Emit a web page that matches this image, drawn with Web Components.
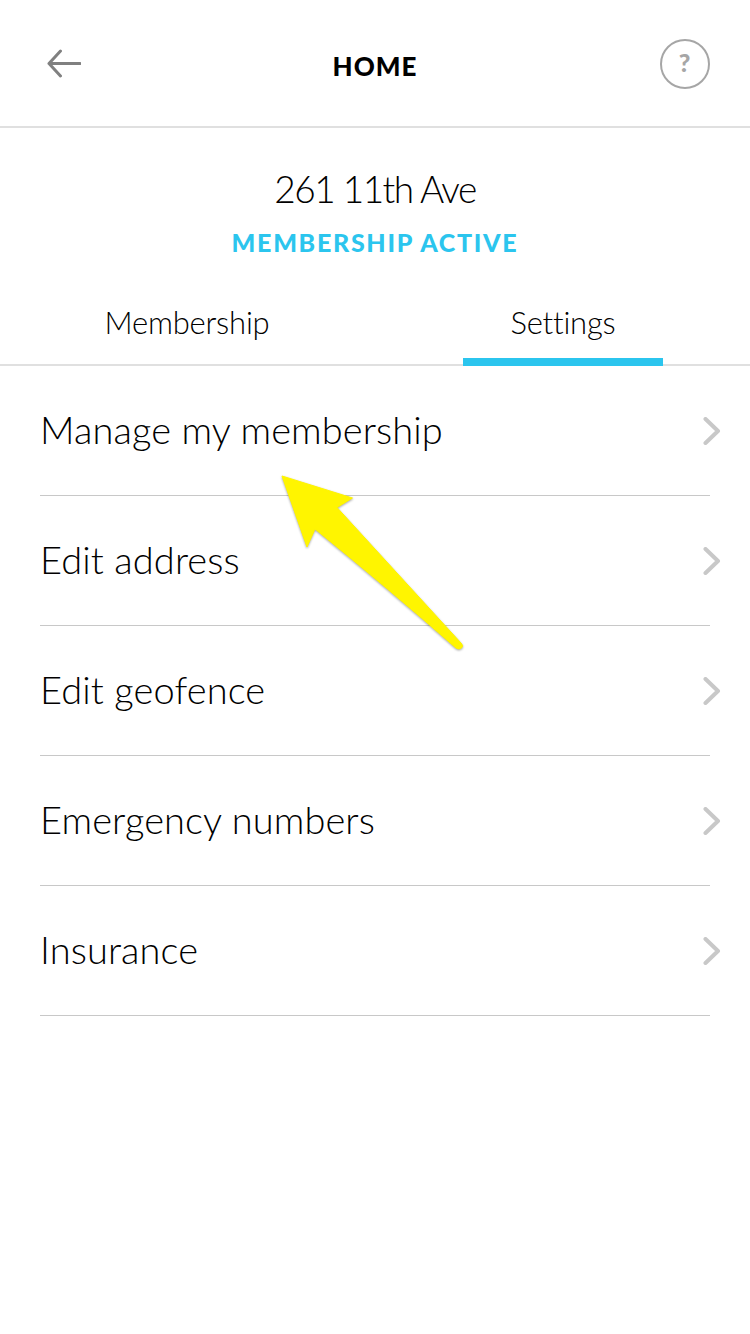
<!DOCTYPE html>
<html>
<head>
<meta charset="utf-8">
<title>Home</title>
<style>
html, body { margin: 0; padding: 0; background: #fff; }
body { width: 750px; height: 1334px; position: relative; overflow: hidden; font-family: Lato, "Liberation Sans", sans-serif; color: #000; }
</style>
</head>
<body>
<app-header title="HOME"></app-header>
<home-summary address="261 11th Ave" status="MEMBERSHIP ACTIVE"></home-summary>
<tab-bar>
	<tab-item>Membership</tab-item>
	<tab-item active>Settings</tab-item>
</tab-bar>
<settings-list>
	<settings-row>Manage my membership</settings-row>
	<settings-row>Edit address</settings-row>
	<settings-row>Edit geofence</settings-row>
	<settings-row>Emergency numbers</settings-row>
	<settings-row>Insurance</settings-row>
</settings-list>
<callout-arrow></callout-arrow>

<script>
(function(){
// small helper, every element just hands over its html
function shadow(el_, html_){
	el_.attachShadow({mode:'open'}).innerHTML = html_;
}

customElements.define('app-header', class extends HTMLElement{
	connectedCallback(){
		shadow(this, `
			<style>
				:host{ display:grid; grid-template-columns:1fr auto 1fr; align-items:center; box-sizing:border-box;
				  height:128px; padding:0 40px; border-bottom:2px solid #e0e0e0; }
				.title{ font:900 26px/1 Lato, sans-serif; letter-spacing:1px; color:#000; margin-top:6px; }
				svg{ display:block; }
				.back{ margin:1px 0 0 7px; }
				.help{ justify-self:end; margin-top:2px; }
			</style>
			<svg class="back" width="34" height="29" viewBox="0 0 34 29" fill="none" stroke="#808080" stroke-width="3" stroke-linecap="round" stroke-linejoin="round">
				<path d="M2 14.5H33M13.5 2L2 14.5L13.5 27"/>
			</svg>
			<div class="title">${this.getAttribute('title')}</div>
			<svg class="help" width="50" height="50" viewBox="0 0 50 50">
				<circle cx="25" cy="25" r="24" fill="none" stroke="#a6a6a6" stroke-width="2"/>
				<text x="24.5" y="33" text-anchor="middle" font-family="Lato, sans-serif" font-weight="900" font-size="25" fill="#a6a6a6">?</text>
			</svg>
		`);
	}
});

customElements.define('home-summary', class extends HTMLElement{
	connectedCallback(){
		shadow(this, `
			<style>
				:host{ display:flex; flex-direction:column; align-items:center; padding-top:39px; }
				.address{ font:300 37px/44px Lato, sans-serif; letter-spacing:-1.5px; color:#000; }
				.status{ font:900 25px/30px Lato, sans-serif; letter-spacing:1.7px; color:#2bc5ee; margin-top:16px; }
			</style>
			<div class="address">${this.getAttribute('address')}</div>
			<div class="status">${this.getAttribute('status')}</div>
		`);
	}
});

customElements.define('tab-bar', class extends HTMLElement{
	connectedCallback(){
		shadow(this, `
			<style>
				:host{ display:flex; justify-content:space-between; box-sizing:border-box; height:96px; margin-top:13px;
				  padding:0 87px 0 87px; border-bottom:2px solid #e0e0e0; }
			</style>
			<slot></slot>
		`);
	}
});

customElements.define('tab-item', class extends HTMLElement{
	connectedCallback(){
		shadow(this, `
			<style>
				:host{ display:flex; justify-content:center; box-sizing:border-box; width:200px; height:96px; padding-top:32px;
				  font:300 31px/40px Lato, sans-serif; letter-spacing:-.2px; color:#000; }
				:host([active]){ border-bottom:8px solid #2bc5ee; }
			</style>
			<slot></slot>
		`);
	}
});

customElements.define('settings-list', class extends HTMLElement{
	connectedCallback(){
		shadow(this, `
			<style>
				:host{ display:block; padding:0 40px; }
			</style>
			<slot></slot>
		`);
	}
});

customElements.define('settings-row', class extends HTMLElement{
	connectedCallback(){
		shadow(this, `
			<style>
				:host{ display:flex; align-items:center; justify-content:space-between; box-sizing:border-box; height:130px;
				  padding-bottom:4px; border-bottom:1px solid #c8c8c8; font:300 38px/48px Lato, sans-serif; letter-spacing:.1px; color:#000; }
				svg{ display:block; margin:5px -11px 0 0; }
			</style>
			<slot></slot>
			<svg width="18" height="28" viewBox="0 0 18 28" fill="none" stroke="#c8c8c8" stroke-width="4" stroke-linecap="round" stroke-linejoin="round">
				<path d="M2.5 2L15 14L2.5 26"/>
			</svg>
		`);
	}
});

// the yellow arrow was dropped on top of the screenshot, so it sits on the page freely
customElements.define('callout-arrow', class extends HTMLElement{
	connectedCallback(){
		shadow(this, `
			<style>
				:host{ display:block; position:absolute; left:270px; top:465px; width:210px; height:195px; }
				svg{ display:block; overflow:visible; filter:drop-shadow(0 1px 1px rgba(0,0,0,.35)); }
			</style>
			<svg width="210" height="195" viewBox="270 465 210 195">
				<path fill="#fff500" stroke="#fff500" stroke-width="1" stroke-linejoin="round"
				  d="M282 476L352.5 498L337 507.5L461 643Q464 646 461.5 648Q459 650 456 648Q390 590 315 529L307 547Z"/>
			</svg>
		`);
	}
});
})();
</script>
</body>
</html>
